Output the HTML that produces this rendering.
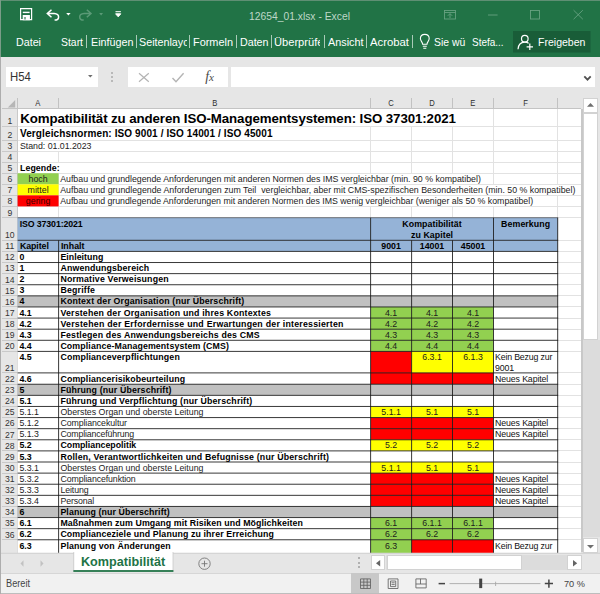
<!DOCTYPE html>
<html lang="de"><head><meta charset="utf-8"><title>12654_01.xlsx - Excel</title>
<style>
html,body{margin:0;padding:0;}
body{width:600px;height:594px;overflow:hidden;position:relative;background:#e6e6e6;font-family:"Liberation Sans",sans-serif;}
div{position:absolute;box-sizing:border-box;white-space:nowrap;}
svg{position:absolute;overflow:visible;}
#title{left:0;top:0;width:600px;height:57.3px;background:#217346;}
.u{transform-origin:0 50%;}
#sheet{left:0;top:97px;width:581.3px;height:456px;background:#fff;overflow:hidden;}
.gl{background:#e2e2e2;}
.c{overflow:hidden;color:#1c1c1c;font-size:8.8px;line-height:11px;}
.b{font-weight:bold;color:#000;}
.bd{background:#2b2b2b;}
.rh{color:#333;font-size:9.4px;transform:scaleX(.92);text-align:center;left:2px;width:15.6px;height:11px;line-height:11px;}
.ch{color:#2e2e2e;font-size:8.5px;text-align:center;top:1.1px;height:11px;line-height:11px;}
.sb{background:#fff;border:1px solid #d2d2d2;}
</style></head><body>

<div id="title"></div>
<div class="u" style="left:249px;top:8.75px;font-size:11.4px;line-height:15px;color:#bed8c8;transform:scaleX(0.9056)">12654_01.xlsx - Excel</div>
<svg style="left:0;top:0" width="600" height="57" viewBox="0 0 600 57" fill="none">
<g stroke="#fff" stroke-width="1.2">
<path d="M20.6 8.6 h11 v11 h-11z"/>
<path d="M22.8 12.4 h6.8" stroke-width="1.4"/>
<path d="M23.3 15.6 h6 v4 h-6z" fill="#fff"/>
<path d="M25 17 v2.6" stroke="#217346" stroke-width="1.1"/>
<path d="M51.5 9.7 l-4.2 3.8 l4.2 3.8 M47.6 13.5 h6.6 c6 0.4 5.6 6.6 0.4 6.6" stroke-width="1.5"/>
</g>
<path d="M66.2 13 h4.4 l-2.2 2.6z" fill="#fff"/>
<g stroke="#5b9a77" stroke-width="1.5">
<path d="M86.8 9.7 l4.2 3.8 l-4.2 3.8 M90.7 13.5 h-6.6 c-6 0.4 -5.6 6.6 -0.4 6.6"/>
</g>
<path d="M99.2 13 h3.8 l-1.9 2.4z" fill="#5b9a77"/>
<path d="M115.5 11.7 h5.4 M115.6 13.8 h5.2 l-2.6 3z" stroke="#fff" fill="#fff" stroke-width="1"/>
<g stroke="#6aa484" stroke-width="0.850">
<rect x="444.5" y="10.5" width="11" height="8.5"/>
<path d="M444.5 12.5 h11 M447.8 15.8 l2.2 -2.2 l2.2 2.2 M450 13.8 v4.2"/>
<path d="M488 15 h9.6"/>
<rect x="530.5" y="10.5" width="9" height="8.5"/>
<path d="M573.6 10.2 l9.2 9 M582.8 10.2 l-9.2 9"/>
</g>
<g stroke="#fff" stroke-width="1.1">
<path d="M422.6 44.2 c0 -2.2 -2.2 -3 -2.2 -5.6 c0 -2.6 2 -4.2 4.4 -4.2 c2.4 0 4.4 1.6 4.4 4.2 c0 2.6 -2.2 3.4 -2.2 5.6z M422.8 46.3 h4 M423.3 48.3 h3"/>
</g>
<rect x="513" y="31" width="77.5" height="21.5" fill="#195d38"/>
<g stroke="#fff" stroke-width="1.2">
<circle cx="524.8" cy="38.7" r="3.3"/>
<path d="M518 49.3 c0.3 -4.8 3 -7.2 6.8 -7.2 c1.6 0 2.8 0.4 3.8 1.2 M526.6 46.8 h6.4 M529.8 43.6 v6.4"/>
</g>
</svg>
<div class="u" style="left:15.5px;top:34.52px;font-size:11.5px;line-height:15px;color:#fff;transform:scaleX(0.9312)">Datei</div>
<div class="u" style="left:61px;top:34.52px;font-size:11.5px;line-height:15px;color:#fff;transform:scaleX(0.9059)">Start</div>
<div class="u" style="left:90.5px;top:34.52px;font-size:11.5px;line-height:15px;color:#fff;transform:scaleX(0.9361)">Einfügen</div>
<div style="left:139px;top:34.52px;width:48.3px;height:15px;overflow:hidden"><div class="u" style="left:0px;top:0px;font-size:11.5px;line-height:15px;color:#fff;transform:scaleX(0.9348)">Seitenlayo</div></div>
<div class="u" style="left:192.5px;top:34.52px;font-size:11.5px;line-height:15px;color:#fff;transform:scaleX(0.9484)">Formeln</div>
<div class="u" style="left:239.5px;top:34.52px;font-size:11.5px;line-height:15px;color:#fff;transform:scaleX(0.9287)">Daten</div>
<div style="left:274px;top:34.52px;width:45.6px;height:15px;overflow:hidden"><div class="u" style="left:0px;top:0px;font-size:11.5px;line-height:15px;color:#fff;transform:scaleX(0.9676)">Überprüfe</div></div>
<div class="u" style="left:327.5px;top:34.52px;font-size:11.5px;line-height:15px;color:#fff;transform:scaleX(0.9413)">Ansicht</div>
<div class="u" style="left:370px;top:34.52px;font-size:11.5px;line-height:15px;color:#fff;transform:scaleX(0.9840)">Acrobat</div>
<div class="u" style="left:434.4px;top:34.52px;font-size:11.5px;line-height:15px;color:#fff;transform:scaleX(0.9039)">Sie wü</div>
<div class="u" style="left:472.4px;top:34.52px;font-size:11.5px;line-height:15px;color:#fff;transform:scaleX(0.8672)">Stefa...</div>
<div class="u" style="left:537.6px;top:34.52px;font-size:11.5px;line-height:15px;color:#fff;transform:scaleX(0.9153)">Freigeben</div>
<div style="left:86.2px;top:35px;width:1px;height:13.3px;background:#a9cab7"></div>
<div style="left:135.5px;top:35px;width:1px;height:13.3px;background:#a9cab7"></div>
<div style="left:188.5px;top:35px;width:1px;height:13.3px;background:#a9cab7"></div>
<div style="left:235.5px;top:35px;width:1px;height:13.3px;background:#a9cab7"></div>
<div style="left:270.5px;top:35px;width:1px;height:13.3px;background:#a9cab7"></div>
<div style="left:323.5px;top:35px;width:1px;height:13.3px;background:#a9cab7"></div>
<div style="left:366px;top:35px;width:1px;height:13.3px;background:#a9cab7"></div>
<div style="left:411.9px;top:35px;width:1px;height:13.3px;background:#a9cab7"></div>
<div style="left:0;top:0;width:600px;height:1px;background:#5f8f74"></div>
<div style="left:0;top:0;width:1px;height:57px;background:#7a9c88"></div>
<div style="left:5.6px;top:67px;width:92.8px;height:20.3px;background:#fff"></div>
<div class="u" style="left:9.6px;top:69.24px;font-size:12px;line-height:16px;color:#333;transform:scaleX(0.9449)">H54</div>
<svg style="left:88px;top:75px" width="5" height="3"><path d="M0 0 h4.6 l-2.3 2.5z" fill="#6e6e6e"/></svg>
<div style="left:111.2px;top:71.6px;width:2px;height:2px;background:#b9b9b9"></div>
<div style="left:111.2px;top:75.6px;width:2px;height:2px;background:#b9b9b9"></div>
<div style="left:111.2px;top:79.6px;width:2px;height:2px;background:#b9b9b9"></div>
<div style="left:127.5px;top:67px;width:100.5px;height:20.3px;background:#fff"></div>
<svg style="left:0;top:0" width="600" height="594" fill="none"><path d="M139 73.2 l9.8 8.6 M148.8 73.2 l-9.8 8.6" stroke="#b4b4b4" stroke-width="1.2"/><path d="M172.5 78 l3.5 3.8 l7.6 -8.6" stroke="#b4b4b4" stroke-width="1.4"/></svg>
<div style="left:205.3px;top:68.5px;font-family:'Liberation Serif',serif;font-style:italic;font-size:14px;line-height:16px;color:#4a4a4a;letter-spacing:-0.3px">f<span style="font-size:11px">x</span></div>
<div style="left:230.7px;top:67px;width:364.7px;height:20.3px;background:#fff"></div>
<svg style="left:584px;top:76px" width="8" height="6" fill="none"><path d="M0.3 0.4 l3.2 3.3 l3.2 -3.3" stroke="#505050" stroke-width="1.8"/></svg>
<div id="sheet">
<div style="left:0;top:0;width:581.3px;height:11.9px;background:#e6e6e6"></div>
<div style="left:0;top:0;width:17.6px;height:456px;background:#e6e6e6"></div>
<div style="left:0;top:0;width:1.1px;height:456px;background:#adadad"></div>
<svg style="left:8.4px;top:3px" width="8" height="8"><path d="M7.2 0 v7.4 h-7.4z" fill="#b6b6b6"/></svg>
<div class="ch" style="left:17.6px;width:41px"><span style="display:inline-block;transform:scaleX(.9)">A</span></div>
<div class="ch" style="left:58.6px;width:312px"><span style="display:inline-block;transform:scaleX(.9)">B</span></div>
<div class="ch" style="left:370.6px;width:41px"><span style="display:inline-block;transform:scaleX(.9)">C</span></div>
<div class="ch" style="left:411.6px;width:40.9px"><span style="display:inline-block;transform:scaleX(.9)">D</span></div>
<div class="ch" style="left:452.5px;width:41px"><span style="display:inline-block;transform:scaleX(.9)">E</span></div>
<div class="ch" style="left:493.5px;width:64.2px"><span style="display:inline-block;transform:scaleX(.9)">F</span></div>
<div style="left:58.1px;top:1px;width:1px;height:10.9px;background:#c2c2c2"></div>
<div style="left:370.1px;top:1px;width:1px;height:10.9px;background:#c2c2c2"></div>
<div style="left:411.1px;top:1px;width:1px;height:10.9px;background:#c2c2c2"></div>
<div style="left:452px;top:1px;width:1px;height:10.9px;background:#c2c2c2"></div>
<div style="left:493px;top:1px;width:1px;height:10.9px;background:#c2c2c2"></div>
<div style="left:557.2px;top:1px;width:1px;height:10.9px;background:#c2c2c2"></div>
<div style="left:17.1px;top:1px;width:1px;height:10.9px;background:#c2c2c2"></div>
<div style="left:2px;top:11.4px;width:581.3px;height:1px;background:#c4c4c4"></div>
<div class="gl" style="left:17.6px;top:28.9px;width:565px;height:1px"></div>
<div style="left:2px;top:28.9px;width:15.6px;height:1px;background:#c9c9c9"></div>
<div class="gl" style="left:17.6px;top:42.6px;width:565px;height:1px"></div>
<div style="left:2px;top:42.6px;width:15.6px;height:1px;background:#c9c9c9"></div>
<div class="gl" style="left:17.6px;top:53.65px;width:565px;height:1px"></div>
<div style="left:2px;top:53.65px;width:15.6px;height:1px;background:#c9c9c9"></div>
<div class="gl" style="left:17.6px;top:64.7px;width:565px;height:1px"></div>
<div style="left:2px;top:64.7px;width:15.6px;height:1px;background:#c9c9c9"></div>
<div class="gl" style="left:17.6px;top:75.75px;width:565px;height:1px"></div>
<div style="left:2px;top:75.75px;width:15.6px;height:1px;background:#c9c9c9"></div>
<div class="gl" style="left:17.6px;top:86.8px;width:565px;height:1px"></div>
<div style="left:2px;top:86.8px;width:15.6px;height:1px;background:#c9c9c9"></div>
<div class="gl" style="left:17.6px;top:97.85px;width:565px;height:1px"></div>
<div style="left:2px;top:97.85px;width:15.6px;height:1px;background:#c9c9c9"></div>
<div class="gl" style="left:17.6px;top:108.9px;width:565px;height:1px"></div>
<div style="left:2px;top:108.9px;width:15.6px;height:1px;background:#c9c9c9"></div>
<div class="gl" style="left:17.6px;top:120.2px;width:565px;height:1px"></div>
<div style="left:2px;top:120.2px;width:15.6px;height:1px;background:#c9c9c9"></div>
<div class="gl" style="left:17.6px;top:142.8px;width:565px;height:1px"></div>
<div style="left:2px;top:142.8px;width:15.6px;height:1px;background:#c9c9c9"></div>
<div class="gl" style="left:17.6px;top:153.91px;width:565px;height:1px"></div>
<div style="left:2px;top:153.91px;width:15.6px;height:1px;background:#c9c9c9"></div>
<div class="gl" style="left:17.6px;top:165.02px;width:565px;height:1px"></div>
<div style="left:2px;top:165.02px;width:15.6px;height:1px;background:#c9c9c9"></div>
<div class="gl" style="left:17.6px;top:176.13px;width:565px;height:1px"></div>
<div style="left:2px;top:176.13px;width:15.6px;height:1px;background:#c9c9c9"></div>
<div class="gl" style="left:17.6px;top:187.24px;width:565px;height:1px"></div>
<div style="left:2px;top:187.24px;width:15.6px;height:1px;background:#c9c9c9"></div>
<div class="gl" style="left:17.6px;top:198.35px;width:565px;height:1px"></div>
<div style="left:2px;top:198.35px;width:15.6px;height:1px;background:#c9c9c9"></div>
<div class="gl" style="left:17.6px;top:209.46px;width:565px;height:1px"></div>
<div style="left:2px;top:209.46px;width:15.6px;height:1px;background:#c9c9c9"></div>
<div class="gl" style="left:17.6px;top:220.57px;width:565px;height:1px"></div>
<div style="left:2px;top:220.57px;width:15.6px;height:1px;background:#c9c9c9"></div>
<div class="gl" style="left:17.6px;top:231.68px;width:565px;height:1px"></div>
<div style="left:2px;top:231.68px;width:15.6px;height:1px;background:#c9c9c9"></div>
<div class="gl" style="left:17.6px;top:242.79px;width:565px;height:1px"></div>
<div style="left:2px;top:242.79px;width:15.6px;height:1px;background:#c9c9c9"></div>
<div class="gl" style="left:17.6px;top:253.9px;width:565px;height:1px"></div>
<div style="left:2px;top:253.9px;width:15.6px;height:1px;background:#c9c9c9"></div>
<div class="gl" style="left:17.6px;top:275.4px;width:565px;height:1px"></div>
<div style="left:2px;top:275.4px;width:15.6px;height:1px;background:#c9c9c9"></div>
<div class="gl" style="left:17.6px;top:286.74px;width:565px;height:1px"></div>
<div style="left:2px;top:286.74px;width:15.6px;height:1px;background:#c9c9c9"></div>
<div class="gl" style="left:17.6px;top:297.85px;width:565px;height:1px"></div>
<div style="left:2px;top:297.85px;width:15.6px;height:1px;background:#c9c9c9"></div>
<div class="gl" style="left:17.6px;top:308.96px;width:565px;height:1px"></div>
<div style="left:2px;top:308.96px;width:15.6px;height:1px;background:#c9c9c9"></div>
<div class="gl" style="left:17.6px;top:320.07px;width:565px;height:1px"></div>
<div style="left:2px;top:320.07px;width:15.6px;height:1px;background:#c9c9c9"></div>
<div class="gl" style="left:17.6px;top:331.18px;width:565px;height:1px"></div>
<div style="left:2px;top:331.18px;width:15.6px;height:1px;background:#c9c9c9"></div>
<div class="gl" style="left:17.6px;top:342.29px;width:565px;height:1px"></div>
<div style="left:2px;top:342.29px;width:15.6px;height:1px;background:#c9c9c9"></div>
<div class="gl" style="left:17.6px;top:353.4px;width:565px;height:1px"></div>
<div style="left:2px;top:353.4px;width:15.6px;height:1px;background:#c9c9c9"></div>
<div class="gl" style="left:17.6px;top:364.51px;width:565px;height:1px"></div>
<div style="left:2px;top:364.51px;width:15.6px;height:1px;background:#c9c9c9"></div>
<div class="gl" style="left:17.6px;top:375.62px;width:565px;height:1px"></div>
<div style="left:2px;top:375.62px;width:15.6px;height:1px;background:#c9c9c9"></div>
<div class="gl" style="left:17.6px;top:386.73px;width:565px;height:1px"></div>
<div style="left:2px;top:386.73px;width:15.6px;height:1px;background:#c9c9c9"></div>
<div class="gl" style="left:17.6px;top:397.84px;width:565px;height:1px"></div>
<div style="left:2px;top:397.84px;width:15.6px;height:1px;background:#c9c9c9"></div>
<div class="gl" style="left:17.6px;top:408.95px;width:565px;height:1px"></div>
<div style="left:2px;top:408.95px;width:15.6px;height:1px;background:#c9c9c9"></div>
<div class="gl" style="left:17.6px;top:420.06px;width:565px;height:1px"></div>
<div style="left:2px;top:420.06px;width:15.6px;height:1px;background:#c9c9c9"></div>
<div class="gl" style="left:17.6px;top:431.17px;width:565px;height:1px"></div>
<div style="left:2px;top:431.17px;width:15.6px;height:1px;background:#c9c9c9"></div>
<div class="gl" style="left:17.6px;top:442.28px;width:565px;height:1px"></div>
<div style="left:2px;top:442.28px;width:15.6px;height:1px;background:#c9c9c9"></div>
<div class="gl" style="left:17.6px;top:464.5px;width:565px;height:1px"></div>
<div style="left:2px;top:464.5px;width:15.6px;height:1px;background:#c9c9c9"></div>
<div class="gl" style="left:58.1px;top:11.9px;width:1px;height:456px"></div>
<div class="gl" style="left:370.1px;top:11.9px;width:1px;height:456px"></div>
<div class="gl" style="left:411.1px;top:11.9px;width:1px;height:456px"></div>
<div class="gl" style="left:452px;top:11.9px;width:1px;height:456px"></div>
<div class="gl" style="left:493px;top:11.9px;width:1px;height:456px"></div>
<div class="gl" style="left:557.2px;top:11.9px;width:1px;height:456px"></div>
<div class="gl" style="left:599.5px;top:11.9px;width:1px;height:456px"></div>
<div style="left:17.1px;top:11.9px;width:1px;height:456px;background:#c9c9c9"></div>
<div class="rh" style="top:18.2px">1</div>
<div class="rh" style="top:31.9px">2</div>
<div class="rh" style="top:42.95px">3</div>
<div class="rh" style="top:54px">4</div>
<div class="rh" style="top:65.05px">5</div>
<div class="rh" style="top:76.1px">6</div>
<div class="rh" style="top:87.15px">7</div>
<div class="rh" style="top:98.2px">8</div>
<div class="rh" style="top:109.5px">9</div>
<div class="rh" style="top:132.1px">10</div>
<div class="rh" style="top:143.21px">11</div>
<div class="rh" style="top:154.32px">12</div>
<div class="rh" style="top:165.43px">13</div>
<div class="rh" style="top:176.54px">14</div>
<div class="rh" style="top:187.65px">15</div>
<div class="rh" style="top:198.76px">16</div>
<div class="rh" style="top:209.87px">17</div>
<div class="rh" style="top:220.98px">18</div>
<div class="rh" style="top:232.09px">19</div>
<div class="rh" style="top:243.2px">20</div>
<div class="rh" style="top:264.7px">21</div>
<div class="rh" style="top:276.04px">22</div>
<div class="rh" style="top:287.15px">23</div>
<div class="rh" style="top:298.26px">24</div>
<div class="rh" style="top:309.37px">25</div>
<div class="rh" style="top:320.48px">26</div>
<div class="rh" style="top:331.59px">27</div>
<div class="rh" style="top:342.7px">28</div>
<div class="rh" style="top:353.81px">29</div>
<div class="rh" style="top:364.92px">30</div>
<div class="rh" style="top:376.03px">31</div>
<div class="rh" style="top:387.14px">32</div>
<div class="rh" style="top:398.25px">33</div>
<div class="rh" style="top:409.36px">34</div>
<div class="rh" style="top:420.47px">35</div>
<div class="rh" style="top:431.58px">36</div>
<svg style="left:0;top:0" width="581.3" height="456"><rect x="17.6" y="76.25" width="41" height="11.05" fill="#92d050"/><rect x="17.6" y="87.3" width="41" height="11.05" fill="#ffff00"/><rect x="17.6" y="98.35" width="41" height="11.05" fill="#ff0000"/><rect x="17.6" y="120.7" width="353" height="22.6" fill="#95b3d7"/><rect x="370.6" y="120.7" width="122.9" height="22.6" fill="#95b3d7"/><rect x="493.5" y="120.7" width="64.2" height="22.6" fill="#95b3d7"/><rect x="17.6" y="143.3" width="41" height="11.11" fill="#95b3d7"/><rect x="58.6" y="143.3" width="312" height="11.11" fill="#95b3d7"/><rect x="370.6" y="143.3" width="41" height="11.11" fill="#95b3d7"/><rect x="411.6" y="143.3" width="40.9" height="11.11" fill="#95b3d7"/><rect x="452.5" y="143.3" width="41" height="11.11" fill="#95b3d7"/><rect x="493.5" y="143.3" width="64.2" height="11.11" fill="#95b3d7"/><rect x="17.6" y="154.41" width="41" height="11.11" fill="#fff"/><rect x="370.6" y="154.41" width="41" height="11.11" fill="#fff"/><rect x="411.6" y="154.41" width="40.9" height="11.11" fill="#fff"/><rect x="452.5" y="154.41" width="41" height="11.11" fill="#fff"/><rect x="493.5" y="154.41" width="64.2" height="11.11" fill="#fff"/><rect x="58.6" y="154.41" width="312" height="11.11" fill="#fff"/><rect x="17.6" y="165.52" width="41" height="11.11" fill="#fff"/><rect x="370.6" y="165.52" width="41" height="11.11" fill="#fff"/><rect x="411.6" y="165.52" width="40.9" height="11.11" fill="#fff"/><rect x="452.5" y="165.52" width="41" height="11.11" fill="#fff"/><rect x="493.5" y="165.52" width="64.2" height="11.11" fill="#fff"/><rect x="58.6" y="165.52" width="312" height="11.11" fill="#fff"/><rect x="17.6" y="176.63" width="41" height="11.11" fill="#fff"/><rect x="370.6" y="176.63" width="41" height="11.11" fill="#fff"/><rect x="411.6" y="176.63" width="40.9" height="11.11" fill="#fff"/><rect x="452.5" y="176.63" width="41" height="11.11" fill="#fff"/><rect x="493.5" y="176.63" width="64.2" height="11.11" fill="#fff"/><rect x="58.6" y="176.63" width="312" height="11.11" fill="#fff"/><rect x="17.6" y="187.74" width="41" height="11.11" fill="#fff"/><rect x="370.6" y="187.74" width="41" height="11.11" fill="#fff"/><rect x="411.6" y="187.74" width="40.9" height="11.11" fill="#fff"/><rect x="452.5" y="187.74" width="41" height="11.11" fill="#fff"/><rect x="493.5" y="187.74" width="64.2" height="11.11" fill="#fff"/><rect x="58.6" y="187.74" width="312" height="11.11" fill="#fff"/><rect x="17.6" y="198.85" width="41" height="11.11" fill="#c0c0c0"/><rect x="370.6" y="198.85" width="41" height="11.11" fill="#c0c0c0"/><rect x="411.6" y="198.85" width="40.9" height="11.11" fill="#c0c0c0"/><rect x="452.5" y="198.85" width="41" height="11.11" fill="#c0c0c0"/><rect x="493.5" y="198.85" width="64.2" height="11.11" fill="#c0c0c0"/><rect x="58.6" y="198.85" width="312" height="11.11" fill="#c0c0c0"/><rect x="17.6" y="209.96" width="41" height="11.11" fill="#fff"/><rect x="370.6" y="209.96" width="41" height="11.11" fill="#92d050"/><rect x="411.6" y="209.96" width="40.9" height="11.11" fill="#92d050"/><rect x="452.5" y="209.96" width="41" height="11.11" fill="#92d050"/><rect x="493.5" y="209.96" width="64.2" height="11.11" fill="#fff"/><rect x="58.6" y="209.96" width="312" height="11.11" fill="#fff"/><rect x="17.6" y="221.07" width="41" height="11.11" fill="#fff"/><rect x="370.6" y="221.07" width="41" height="11.11" fill="#92d050"/><rect x="411.6" y="221.07" width="40.9" height="11.11" fill="#92d050"/><rect x="452.5" y="221.07" width="41" height="11.11" fill="#92d050"/><rect x="493.5" y="221.07" width="64.2" height="11.11" fill="#fff"/><rect x="58.6" y="221.07" width="312" height="11.11" fill="#fff"/><rect x="17.6" y="232.18" width="41" height="11.11" fill="#fff"/><rect x="370.6" y="232.18" width="41" height="11.11" fill="#92d050"/><rect x="411.6" y="232.18" width="40.9" height="11.11" fill="#92d050"/><rect x="452.5" y="232.18" width="41" height="11.11" fill="#92d050"/><rect x="493.5" y="232.18" width="64.2" height="11.11" fill="#fff"/><rect x="58.6" y="232.18" width="312" height="11.11" fill="#fff"/><rect x="17.6" y="243.29" width="41" height="11.11" fill="#fff"/><rect x="370.6" y="243.29" width="41" height="11.11" fill="#92d050"/><rect x="411.6" y="243.29" width="40.9" height="11.11" fill="#92d050"/><rect x="452.5" y="243.29" width="41" height="11.11" fill="#92d050"/><rect x="493.5" y="243.29" width="64.2" height="11.11" fill="#fff"/><rect x="58.6" y="243.29" width="312" height="11.11" fill="#fff"/><rect x="17.6" y="254.4" width="41" height="21.5" fill="#fff"/><rect x="370.6" y="254.4" width="41" height="21.5" fill="#ff0000"/><rect x="411.6" y="254.4" width="40.9" height="21.5" fill="#ffff00"/><rect x="452.5" y="254.4" width="41" height="21.5" fill="#ffff00"/><rect x="493.5" y="254.4" width="64.2" height="21.5" fill="#fff"/><rect x="58.6" y="254.4" width="312" height="21.5" fill="#fff"/><rect x="17.6" y="275.9" width="41" height="11.34" fill="#fff"/><rect x="370.6" y="275.9" width="41" height="11.34" fill="#ff0000"/><rect x="411.6" y="275.9" width="40.9" height="11.34" fill="#ff0000"/><rect x="452.5" y="275.9" width="41" height="11.34" fill="#ff0000"/><rect x="493.5" y="275.9" width="64.2" height="11.34" fill="#fff"/><rect x="58.6" y="275.9" width="312" height="11.34" fill="#fff"/><rect x="17.6" y="287.24" width="41" height="11.11" fill="#c0c0c0"/><rect x="370.6" y="287.24" width="41" height="11.11" fill="#c0c0c0"/><rect x="411.6" y="287.24" width="40.9" height="11.11" fill="#c0c0c0"/><rect x="452.5" y="287.24" width="41" height="11.11" fill="#c0c0c0"/><rect x="493.5" y="287.24" width="64.2" height="11.11" fill="#c0c0c0"/><rect x="58.6" y="287.24" width="312" height="11.11" fill="#c0c0c0"/><rect x="17.6" y="298.35" width="41" height="11.11" fill="#fff"/><rect x="370.6" y="298.35" width="41" height="11.11" fill="#fff"/><rect x="411.6" y="298.35" width="40.9" height="11.11" fill="#fff"/><rect x="452.5" y="298.35" width="41" height="11.11" fill="#fff"/><rect x="493.5" y="298.35" width="64.2" height="11.11" fill="#fff"/><rect x="58.6" y="298.35" width="312" height="11.11" fill="#fff"/><rect x="17.6" y="309.46" width="41" height="11.11" fill="#fff"/><rect x="370.6" y="309.46" width="41" height="11.11" fill="#ffff00"/><rect x="411.6" y="309.46" width="40.9" height="11.11" fill="#ffff00"/><rect x="452.5" y="309.46" width="41" height="11.11" fill="#ffff00"/><rect x="493.5" y="309.46" width="64.2" height="11.11" fill="#fff"/><rect x="58.6" y="309.46" width="312" height="11.11" fill="#fff"/><rect x="17.6" y="320.57" width="41" height="11.11" fill="#fff"/><rect x="370.6" y="320.57" width="41" height="11.11" fill="#ff0000"/><rect x="411.6" y="320.57" width="40.9" height="11.11" fill="#ff0000"/><rect x="452.5" y="320.57" width="41" height="11.11" fill="#ff0000"/><rect x="493.5" y="320.57" width="64.2" height="11.11" fill="#fff"/><rect x="58.6" y="320.57" width="312" height="11.11" fill="#fff"/><rect x="17.6" y="331.68" width="41" height="11.11" fill="#fff"/><rect x="370.6" y="331.68" width="41" height="11.11" fill="#ff0000"/><rect x="411.6" y="331.68" width="40.9" height="11.11" fill="#ff0000"/><rect x="452.5" y="331.68" width="41" height="11.11" fill="#ff0000"/><rect x="493.5" y="331.68" width="64.2" height="11.11" fill="#fff"/><rect x="58.6" y="331.68" width="312" height="11.11" fill="#fff"/><rect x="17.6" y="342.79" width="41" height="11.11" fill="#fff"/><rect x="370.6" y="342.79" width="41" height="11.11" fill="#ffff00"/><rect x="411.6" y="342.79" width="40.9" height="11.11" fill="#ffff00"/><rect x="452.5" y="342.79" width="41" height="11.11" fill="#ffff00"/><rect x="493.5" y="342.79" width="64.2" height="11.11" fill="#fff"/><rect x="58.6" y="342.79" width="312" height="11.11" fill="#fff"/><rect x="17.6" y="353.9" width="41" height="11.11" fill="#fff"/><rect x="370.6" y="353.9" width="41" height="11.11" fill="#fff"/><rect x="411.6" y="353.9" width="40.9" height="11.11" fill="#fff"/><rect x="452.5" y="353.9" width="41" height="11.11" fill="#fff"/><rect x="493.5" y="353.9" width="64.2" height="11.11" fill="#fff"/><rect x="58.6" y="353.9" width="312" height="11.11" fill="#fff"/><rect x="17.6" y="365.01" width="41" height="11.11" fill="#fff"/><rect x="370.6" y="365.01" width="41" height="11.11" fill="#ffff00"/><rect x="411.6" y="365.01" width="40.9" height="11.11" fill="#ffff00"/><rect x="452.5" y="365.01" width="41" height="11.11" fill="#ffff00"/><rect x="493.5" y="365.01" width="64.2" height="11.11" fill="#fff"/><rect x="58.6" y="365.01" width="312" height="11.11" fill="#fff"/><rect x="17.6" y="376.12" width="41" height="11.11" fill="#fff"/><rect x="370.6" y="376.12" width="41" height="11.11" fill="#ff0000"/><rect x="411.6" y="376.12" width="40.9" height="11.11" fill="#ff0000"/><rect x="452.5" y="376.12" width="41" height="11.11" fill="#ff0000"/><rect x="493.5" y="376.12" width="64.2" height="11.11" fill="#fff"/><rect x="58.6" y="376.12" width="312" height="11.11" fill="#fff"/><rect x="17.6" y="387.23" width="41" height="11.11" fill="#fff"/><rect x="370.6" y="387.23" width="41" height="11.11" fill="#ff0000"/><rect x="411.6" y="387.23" width="40.9" height="11.11" fill="#ff0000"/><rect x="452.5" y="387.23" width="41" height="11.11" fill="#ff0000"/><rect x="493.5" y="387.23" width="64.2" height="11.11" fill="#fff"/><rect x="58.6" y="387.23" width="312" height="11.11" fill="#fff"/><rect x="17.6" y="398.34" width="41" height="11.11" fill="#fff"/><rect x="370.6" y="398.34" width="41" height="11.11" fill="#ff0000"/><rect x="411.6" y="398.34" width="40.9" height="11.11" fill="#ff0000"/><rect x="452.5" y="398.34" width="41" height="11.11" fill="#ff0000"/><rect x="493.5" y="398.34" width="64.2" height="11.11" fill="#fff"/><rect x="58.6" y="398.34" width="312" height="11.11" fill="#fff"/><rect x="17.6" y="409.45" width="41" height="11.11" fill="#c0c0c0"/><rect x="370.6" y="409.45" width="41" height="11.11" fill="#c0c0c0"/><rect x="411.6" y="409.45" width="40.9" height="11.11" fill="#c0c0c0"/><rect x="452.5" y="409.45" width="41" height="11.11" fill="#c0c0c0"/><rect x="493.5" y="409.45" width="64.2" height="11.11" fill="#c0c0c0"/><rect x="58.6" y="409.45" width="312" height="11.11" fill="#c0c0c0"/><rect x="17.6" y="420.56" width="41" height="11.11" fill="#fff"/><rect x="370.6" y="420.56" width="41" height="11.11" fill="#92d050"/><rect x="411.6" y="420.56" width="40.9" height="11.11" fill="#92d050"/><rect x="452.5" y="420.56" width="41" height="11.11" fill="#92d050"/><rect x="493.5" y="420.56" width="64.2" height="11.11" fill="#fff"/><rect x="58.6" y="420.56" width="312" height="11.11" fill="#fff"/><rect x="17.6" y="431.67" width="41" height="11.11" fill="#fff"/><rect x="370.6" y="431.67" width="41" height="11.11" fill="#92d050"/><rect x="411.6" y="431.67" width="40.9" height="11.11" fill="#92d050"/><rect x="452.5" y="431.67" width="41" height="11.11" fill="#92d050"/><rect x="493.5" y="431.67" width="64.2" height="11.11" fill="#fff"/><rect x="58.6" y="431.67" width="312" height="11.11" fill="#fff"/><rect x="17.6" y="442.78" width="41" height="22.22" fill="#fff"/><rect x="370.6" y="442.78" width="41" height="22.22" fill="#92d050"/><rect x="411.6" y="442.78" width="40.9" height="22.22" fill="#ff0000"/><rect x="452.5" y="442.78" width="41" height="22.22" fill="#ff0000"/><rect x="493.5" y="442.78" width="64.2" height="22.22" fill="#fff"/><rect x="58.6" y="442.78" width="312" height="22.22" fill="#fff"/></svg>
<div style="left:18.2px;top:12.4px;width:474.8px;height:16.5px;background:#fff"></div>
<div style="left:18.2px;top:29.9px;width:281.8px;height:12.7px;background:#fff"></div>
<div style="left:18.2px;top:43.6px;width:81.8px;height:10.05px;background:#fff"></div>
<div style="left:18.2px;top:65.7px;width:43.8px;height:10.05px;background:#fff"></div>
<div style="left:59.2px;top:76.75px;width:433.8px;height:10.05px;background:#fff"></div>
<div style="left:59.2px;top:87.8px;width:521.8px;height:10.05px;background:#fff"></div>
<div style="left:59.2px;top:98.85px;width:497.8px;height:10.05px;background:#fff"></div>
<div class="c" style="left:17.6px;top:11.9px;width:540.1px;height:17.5px;overflow:visible;"><div class="c b" style="left:0;right:0;bottom:-1.2px;text-align:left;padding-left:2.6px;font-size:13.3px;line-height:16.6px;letter-spacing:-0.098px;overflow:visible;">Kompatibilität zu anderen ISO-Managementsystemen: ISO 37301:2021</div></div>
<div class="c" style="left:17.6px;top:29.4px;width:540.1px;height:13.7px;overflow:visible;"><div class="c b" style="left:0;right:0;bottom:-0.8px;text-align:left;padding-left:2.4px;font-size:10.0px;line-height:12.5px;letter-spacing:0.105px;overflow:visible;">Vergleichsnormen: ISO 9001 / ISO 14001 / ISO 45001</div></div>
<div class="c" style="left:17.6px;top:43.1px;width:540.1px;height:11.05px;overflow:visible;"><div class="c" style="left:0;right:0;bottom:-0.5px;text-align:left;padding-left:2.4px;letter-spacing:-0.027px;overflow:visible;">Stand: 01.01.2023</div></div>
<div class="c" style="left:17.6px;top:65.2px;width:353px;height:11.05px;overflow:visible;"><div class="c b" style="left:0;right:0;bottom:-0.5px;text-align:left;padding-left:2.3px;letter-spacing:0.112px;overflow:visible;">Legende:</div></div>
<div class="c" style="left:17.6px;top:76.25px;width:41px;height:11.05px;"><div class="c" style="left:0;right:0;bottom:-0.5px;text-align:center;">hoch</div></div>
<div class="c" style="left:17.6px;top:87.3px;width:41px;height:11.05px;"><div class="c" style="left:0;right:0;bottom:-0.5px;text-align:center;">mittel</div></div>
<div class="c" style="left:17.6px;top:98.35px;width:41px;height:11.05px;"><div class="c" style="left:0;right:0;bottom:-0.5px;text-align:center;color:#400000;">gering</div></div>
<div class="c" style="left:58.6px;top:76.25px;width:541.4px;height:11.05px;overflow:visible;"><div class="c" style="left:0;right:0;bottom:-0.5px;text-align:left;padding-left:1.6px;letter-spacing:-0.009px;overflow:visible;">Aufbau und grundlegende Anforderungen mit anderen Normen des IMS vergleichbar (min. 90 % kompatibel)</div></div>
<div class="c" style="left:58.6px;top:87.3px;width:541.4px;height:11.05px;overflow:visible;"><div class="c" style="left:0;right:0;bottom:-0.5px;text-align:left;padding-left:1.6px;white-space:pre;letter-spacing:0.003px;overflow:visible;">Aufbau und grundlegende Anforderungen zum Teil  vergleichbar, aber mit CMS-spezifischen Besonderheiten (min. 50 % kompatibel)</div></div>
<div class="c" style="left:58.6px;top:98.35px;width:541.4px;height:11.05px;overflow:visible;"><div class="c" style="left:0;right:0;bottom:-0.5px;text-align:left;padding-left:1.6px;letter-spacing:-0.017px;overflow:visible;">Aufbau und grundlegende Anforderungen mit anderen Normen des IMS wenig vergleichbar (weniger als 50 % kompatibel)</div></div>
<div class="c" style="left:17.6px;top:120.7px;width:353px;height:22.6px;"><div class="c b" style="left:0;right:0;top:1px;text-align:left;padding-left:2.1px;letter-spacing:-0.122px;">ISO 37301:2021</div></div>
<div class="c" style="left:370.6px;top:120.7px;width:122.9px;height:22.6px;"><div class="c b" style="left:0;right:0;top:1px;text-align:center;white-space:pre;letter-spacing:0.057px;padding-left:0.057px;">Kompatibilität
zu Kapitel</div></div>
<div class="c" style="left:493.5px;top:120.7px;width:64.2px;height:22.6px;"><div class="c b" style="left:0;right:0;top:1px;text-align:center;letter-spacing:0.073px;padding-left:0.073px;">Bemerkung</div></div>
<div class="c" style="left:17.6px;top:143.3px;width:41px;height:11.11px;"><div class="c b" style="left:0;right:0;bottom:-0.5px;text-align:left;padding-left:2.3px;letter-spacing:-0.057px;">Kapitel</div></div>
<div class="c" style="left:58.6px;top:143.3px;width:312px;height:11.11px;"><div class="c b" style="left:0;right:0;bottom:-0.5px;text-align:left;padding-left:2.3px;letter-spacing:0.027px;">Inhalt</div></div>
<div class="c" style="left:370.6px;top:143.3px;width:41px;height:11.11px;"><div class="c b" style="left:0;right:0;bottom:-0.5px;text-align:center;">9001</div></div>
<div class="c" style="left:411.6px;top:143.3px;width:40.9px;height:11.11px;"><div class="c b" style="left:0;right:0;bottom:-0.5px;text-align:center;">14001</div></div>
<div class="c" style="left:452.5px;top:143.3px;width:41px;height:11.11px;"><div class="c b" style="left:0;right:0;bottom:-0.5px;text-align:center;">45001</div></div>
<div class="c" style="left:493.5px;top:143.3px;width:64.2px;height:11.11px;"></div>
<div class="c" style="left:17.6px;top:154.41px;width:41px;height:11.11px;"><div class="c b" style="left:0;right:0;bottom:-0.5px;text-align:left;padding-left:1.8px;">0</div></div>
<div class="c" style="left:370.6px;top:154.41px;width:41px;height:11.11px;"></div>
<div class="c" style="left:411.6px;top:154.41px;width:40.9px;height:11.11px;"></div>
<div class="c" style="left:452.5px;top:154.41px;width:41px;height:11.11px;"></div>
<div class="c" style="left:493.5px;top:154.41px;width:64.2px;height:11.11px;"></div>
<div class="c" style="left:58.6px;top:154.41px;width:312px;height:11.11px;"><div class="c b" style="left:0;right:0;bottom:-0.5px;text-align:left;padding-left:1.8px;letter-spacing:0.041px;">Einleitung</div></div>
<div class="c" style="left:17.6px;top:165.52px;width:41px;height:11.11px;"><div class="c b" style="left:0;right:0;bottom:-0.5px;text-align:left;padding-left:1.8px;">1</div></div>
<div class="c" style="left:370.6px;top:165.52px;width:41px;height:11.11px;"></div>
<div class="c" style="left:411.6px;top:165.52px;width:40.9px;height:11.11px;"></div>
<div class="c" style="left:452.5px;top:165.52px;width:41px;height:11.11px;"></div>
<div class="c" style="left:493.5px;top:165.52px;width:64.2px;height:11.11px;"></div>
<div class="c" style="left:58.6px;top:165.52px;width:312px;height:11.11px;"><div class="c b" style="left:0;right:0;bottom:-0.5px;text-align:left;padding-left:1.8px;letter-spacing:0.141px;">Anwendungsbereich</div></div>
<div class="c" style="left:17.6px;top:176.63px;width:41px;height:11.11px;"><div class="c b" style="left:0;right:0;bottom:-0.5px;text-align:left;padding-left:1.8px;">2</div></div>
<div class="c" style="left:370.6px;top:176.63px;width:41px;height:11.11px;"></div>
<div class="c" style="left:411.6px;top:176.63px;width:40.9px;height:11.11px;"></div>
<div class="c" style="left:452.5px;top:176.63px;width:41px;height:11.11px;"></div>
<div class="c" style="left:493.5px;top:176.63px;width:64.2px;height:11.11px;"></div>
<div class="c" style="left:58.6px;top:176.63px;width:312px;height:11.11px;"><div class="c b" style="left:0;right:0;bottom:-0.5px;text-align:left;padding-left:1.8px;letter-spacing:0.173px;">Normative Verweisungen</div></div>
<div class="c" style="left:17.6px;top:187.74px;width:41px;height:11.11px;"><div class="c b" style="left:0;right:0;bottom:-0.5px;text-align:left;padding-left:1.8px;">3</div></div>
<div class="c" style="left:370.6px;top:187.74px;width:41px;height:11.11px;"></div>
<div class="c" style="left:411.6px;top:187.74px;width:40.9px;height:11.11px;"></div>
<div class="c" style="left:452.5px;top:187.74px;width:41px;height:11.11px;"></div>
<div class="c" style="left:493.5px;top:187.74px;width:64.2px;height:11.11px;"></div>
<div class="c" style="left:58.6px;top:187.74px;width:312px;height:11.11px;"><div class="c b" style="left:0;right:0;bottom:-0.5px;text-align:left;padding-left:1.8px;letter-spacing:0.193px;">Begriffe</div></div>
<div class="c" style="left:17.6px;top:198.85px;width:41px;height:11.11px;"><div class="c b" style="left:0;right:0;bottom:-0.5px;text-align:left;padding-left:1.8px;">4</div></div>
<div class="c" style="left:370.6px;top:198.85px;width:41px;height:11.11px;"></div>
<div class="c" style="left:411.6px;top:198.85px;width:40.9px;height:11.11px;"></div>
<div class="c" style="left:452.5px;top:198.85px;width:41px;height:11.11px;"></div>
<div class="c" style="left:493.5px;top:198.85px;width:64.2px;height:11.11px;"></div>
<div class="c" style="left:58.6px;top:198.85px;width:312px;height:11.11px;"><div class="c b" style="left:0;right:0;bottom:-0.5px;text-align:left;padding-left:1.8px;letter-spacing:0.157px;">Kontext der Organisation (nur Überschrift)</div></div>
<div class="c" style="left:17.6px;top:209.96px;width:41px;height:11.11px;"><div class="c b" style="left:0;right:0;bottom:-0.5px;text-align:left;padding-left:1.8px;">4.1</div></div>
<div class="c" style="left:370.6px;top:209.96px;width:41px;height:11.11px;"><div class="c" style="left:0;right:0;bottom:-0.5px;text-align:center;">4.1</div></div>
<div class="c" style="left:411.6px;top:209.96px;width:40.9px;height:11.11px;"><div class="c" style="left:0;right:0;bottom:-0.5px;text-align:center;">4.1</div></div>
<div class="c" style="left:452.5px;top:209.96px;width:41px;height:11.11px;"><div class="c" style="left:0;right:0;bottom:-0.5px;text-align:center;">4.1</div></div>
<div class="c" style="left:493.5px;top:209.96px;width:64.2px;height:11.11px;"></div>
<div class="c" style="left:58.6px;top:209.96px;width:312px;height:11.11px;"><div class="c b" style="left:0;right:0;bottom:-0.5px;text-align:left;padding-left:1.8px;letter-spacing:0.192px;">Verstehen der Organisation und ihres Kontextes</div></div>
<div class="c" style="left:17.6px;top:221.07px;width:41px;height:11.11px;"><div class="c b" style="left:0;right:0;bottom:-0.5px;text-align:left;padding-left:1.8px;">4.2</div></div>
<div class="c" style="left:370.6px;top:221.07px;width:41px;height:11.11px;"><div class="c" style="left:0;right:0;bottom:-0.5px;text-align:center;">4.2</div></div>
<div class="c" style="left:411.6px;top:221.07px;width:40.9px;height:11.11px;"><div class="c" style="left:0;right:0;bottom:-0.5px;text-align:center;">4.2</div></div>
<div class="c" style="left:452.5px;top:221.07px;width:41px;height:11.11px;"><div class="c" style="left:0;right:0;bottom:-0.5px;text-align:center;">4.2</div></div>
<div class="c" style="left:493.5px;top:221.07px;width:64.2px;height:11.11px;"></div>
<div class="c" style="left:58.6px;top:221.07px;width:312px;height:11.11px;"><div class="c b" style="left:0;right:0;bottom:-0.5px;text-align:left;padding-left:1.8px;letter-spacing:0.232px;">Verstehen der Erfordernisse und Erwartungen der interessierten</div></div>
<div class="c" style="left:17.6px;top:232.18px;width:41px;height:11.11px;"><div class="c b" style="left:0;right:0;bottom:-0.5px;text-align:left;padding-left:1.8px;">4.3</div></div>
<div class="c" style="left:370.6px;top:232.18px;width:41px;height:11.11px;"><div class="c" style="left:0;right:0;bottom:-0.5px;text-align:center;">4.3</div></div>
<div class="c" style="left:411.6px;top:232.18px;width:40.9px;height:11.11px;"><div class="c" style="left:0;right:0;bottom:-0.5px;text-align:center;">4.3</div></div>
<div class="c" style="left:452.5px;top:232.18px;width:41px;height:11.11px;"><div class="c" style="left:0;right:0;bottom:-0.5px;text-align:center;">4.3</div></div>
<div class="c" style="left:493.5px;top:232.18px;width:64.2px;height:11.11px;"></div>
<div class="c" style="left:58.6px;top:232.18px;width:312px;height:11.11px;"><div class="c b" style="left:0;right:0;bottom:-0.5px;text-align:left;padding-left:1.8px;letter-spacing:0.194px;">Festlegen des Anwendungsbereichs des CMS</div></div>
<div class="c" style="left:17.6px;top:243.29px;width:41px;height:11.11px;"><div class="c b" style="left:0;right:0;bottom:-0.5px;text-align:left;padding-left:1.8px;">4.4</div></div>
<div class="c" style="left:370.6px;top:243.29px;width:41px;height:11.11px;"><div class="c" style="left:0;right:0;bottom:-0.5px;text-align:center;">4.4</div></div>
<div class="c" style="left:411.6px;top:243.29px;width:40.9px;height:11.11px;"><div class="c" style="left:0;right:0;bottom:-0.5px;text-align:center;">4.4</div></div>
<div class="c" style="left:452.5px;top:243.29px;width:41px;height:11.11px;"><div class="c" style="left:0;right:0;bottom:-0.5px;text-align:center;">4.4</div></div>
<div class="c" style="left:493.5px;top:243.29px;width:64.2px;height:11.11px;"></div>
<div class="c" style="left:58.6px;top:243.29px;width:312px;height:11.11px;"><div class="c b" style="left:0;right:0;bottom:-0.5px;text-align:left;padding-left:1.8px;letter-spacing:0.116px;">Compliance-Managementsystem (CMS)</div></div>
<div class="c" style="left:17.6px;top:254.4px;width:41px;height:21.5px;"><div class="c b" style="left:0;right:0;top:1px;text-align:left;padding-left:1.8px;">4.5</div></div>
<div class="c" style="left:370.6px;top:254.4px;width:41px;height:21.5px;"></div>
<div class="c" style="left:411.6px;top:254.4px;width:40.9px;height:21.5px;"><div class="c" style="left:0;right:0;top:1px;text-align:center;">6.3.1</div></div>
<div class="c" style="left:452.5px;top:254.4px;width:41px;height:21.5px;"><div class="c" style="left:0;right:0;top:1px;text-align:center;">6.1.3</div></div>
<div class="c" style="left:493.5px;top:254.4px;width:64.2px;height:21.5px;"><div class="c" style="left:0;right:0;top:1px;text-align:left;padding-left:1.5px;color:#111;white-space:pre;letter-spacing:-0.175px;">Kein Bezug zur
9001</div></div>
<div class="c" style="left:58.6px;top:254.4px;width:312px;height:21.5px;"><div class="c b" style="left:0;right:0;top:1px;text-align:left;padding-left:1.8px;letter-spacing:0.147px;">Complianceverpflichtungen</div></div>
<div class="c" style="left:17.6px;top:275.9px;width:41px;height:11.34px;"><div class="c b" style="left:0;right:0;bottom:-0.5px;text-align:left;padding-left:1.8px;">4.6</div></div>
<div class="c" style="left:370.6px;top:275.9px;width:41px;height:11.34px;"></div>
<div class="c" style="left:411.6px;top:275.9px;width:40.9px;height:11.34px;"></div>
<div class="c" style="left:452.5px;top:275.9px;width:41px;height:11.34px;"></div>
<div class="c" style="left:493.5px;top:275.9px;width:64.2px;height:11.34px;"><div class="c" style="left:0;right:0;bottom:-0.5px;text-align:left;padding-left:1.5px;color:#111;letter-spacing:-0.124px;">Neues Kapitel</div></div>
<div class="c" style="left:58.6px;top:275.9px;width:312px;height:11.34px;"><div class="c b" style="left:0;right:0;bottom:-0.5px;text-align:left;padding-left:1.8px;letter-spacing:0.132px;">Compliancerisikobeurteilung</div></div>
<div class="c" style="left:17.6px;top:287.24px;width:41px;height:11.11px;"><div class="c b" style="left:0;right:0;bottom:-0.5px;text-align:left;padding-left:1.8px;">5</div></div>
<div class="c" style="left:370.6px;top:287.24px;width:41px;height:11.11px;"></div>
<div class="c" style="left:411.6px;top:287.24px;width:40.9px;height:11.11px;"></div>
<div class="c" style="left:452.5px;top:287.24px;width:41px;height:11.11px;"></div>
<div class="c" style="left:493.5px;top:287.24px;width:64.2px;height:11.11px;"></div>
<div class="c" style="left:58.6px;top:287.24px;width:312px;height:11.11px;"><div class="c b" style="left:0;right:0;bottom:-0.5px;text-align:left;padding-left:1.8px;letter-spacing:0.148px;">Führung (nur Überschrift)</div></div>
<div class="c" style="left:17.6px;top:298.35px;width:41px;height:11.11px;"><div class="c b" style="left:0;right:0;bottom:-0.5px;text-align:left;padding-left:1.8px;">5.1</div></div>
<div class="c" style="left:370.6px;top:298.35px;width:41px;height:11.11px;"></div>
<div class="c" style="left:411.6px;top:298.35px;width:40.9px;height:11.11px;"></div>
<div class="c" style="left:452.5px;top:298.35px;width:41px;height:11.11px;"></div>
<div class="c" style="left:493.5px;top:298.35px;width:64.2px;height:11.11px;"></div>
<div class="c" style="left:58.6px;top:298.35px;width:312px;height:11.11px;"><div class="c b" style="left:0;right:0;bottom:-0.5px;text-align:left;padding-left:1.8px;letter-spacing:0.169px;">Führung und Verpflichtung (nur Überschrift)</div></div>
<div class="c" style="left:17.6px;top:309.46px;width:41px;height:11.11px;"><div class="c" style="left:0;right:0;bottom:-0.5px;text-align:left;padding-left:1.8px;">5.1.1</div></div>
<div class="c" style="left:370.6px;top:309.46px;width:41px;height:11.11px;"><div class="c" style="left:0;right:0;bottom:-0.5px;text-align:center;">5.1.1</div></div>
<div class="c" style="left:411.6px;top:309.46px;width:40.9px;height:11.11px;"><div class="c" style="left:0;right:0;bottom:-0.5px;text-align:center;">5.1</div></div>
<div class="c" style="left:452.5px;top:309.46px;width:41px;height:11.11px;"><div class="c" style="left:0;right:0;bottom:-0.5px;text-align:center;">5.1</div></div>
<div class="c" style="left:493.5px;top:309.46px;width:64.2px;height:11.11px;"></div>
<div class="c" style="left:58.6px;top:309.46px;width:312px;height:11.11px;"><div class="c" style="left:0;right:0;bottom:-0.5px;text-align:left;padding-left:1.8px;letter-spacing:0.008px;">Oberstes Organ und oberste Leitung</div></div>
<div class="c" style="left:17.6px;top:320.57px;width:41px;height:11.11px;"><div class="c" style="left:0;right:0;bottom:-0.5px;text-align:left;padding-left:1.8px;">5.1.2</div></div>
<div class="c" style="left:370.6px;top:320.57px;width:41px;height:11.11px;"></div>
<div class="c" style="left:411.6px;top:320.57px;width:40.9px;height:11.11px;"></div>
<div class="c" style="left:452.5px;top:320.57px;width:41px;height:11.11px;"></div>
<div class="c" style="left:493.5px;top:320.57px;width:64.2px;height:11.11px;"><div class="c" style="left:0;right:0;bottom:-0.5px;text-align:left;padding-left:1.5px;color:#111;letter-spacing:-0.124px;">Neues Kapitel</div></div>
<div class="c" style="left:58.6px;top:320.57px;width:312px;height:11.11px;"><div class="c" style="left:0;right:0;bottom:-0.5px;text-align:left;padding-left:1.8px;letter-spacing:-0.092px;">Compliancekultur</div></div>
<div class="c" style="left:17.6px;top:331.68px;width:41px;height:11.11px;"><div class="c" style="left:0;right:0;bottom:-0.5px;text-align:left;padding-left:1.8px;">5.1.3</div></div>
<div class="c" style="left:370.6px;top:331.68px;width:41px;height:11.11px;"></div>
<div class="c" style="left:411.6px;top:331.68px;width:40.9px;height:11.11px;"></div>
<div class="c" style="left:452.5px;top:331.68px;width:41px;height:11.11px;"></div>
<div class="c" style="left:493.5px;top:331.68px;width:64.2px;height:11.11px;"><div class="c" style="left:0;right:0;bottom:-0.5px;text-align:left;padding-left:1.5px;color:#111;letter-spacing:-0.124px;">Neues Kapitel</div></div>
<div class="c" style="left:58.6px;top:331.68px;width:312px;height:11.11px;"><div class="c" style="left:0;right:0;bottom:-0.5px;text-align:left;padding-left:1.8px;letter-spacing:-0.157px;">Complianceführung</div></div>
<div class="c" style="left:17.6px;top:342.79px;width:41px;height:11.11px;"><div class="c b" style="left:0;right:0;bottom:-0.5px;text-align:left;padding-left:1.8px;">5.2</div></div>
<div class="c" style="left:370.6px;top:342.79px;width:41px;height:11.11px;"><div class="c" style="left:0;right:0;bottom:-0.5px;text-align:center;">5.2</div></div>
<div class="c" style="left:411.6px;top:342.79px;width:40.9px;height:11.11px;"><div class="c" style="left:0;right:0;bottom:-0.5px;text-align:center;">5.2</div></div>
<div class="c" style="left:452.5px;top:342.79px;width:41px;height:11.11px;"><div class="c" style="left:0;right:0;bottom:-0.5px;text-align:center;">5.2</div></div>
<div class="c" style="left:493.5px;top:342.79px;width:64.2px;height:11.11px;"></div>
<div class="c" style="left:58.6px;top:342.79px;width:312px;height:11.11px;"><div class="c b" style="left:0;right:0;bottom:-0.5px;text-align:left;padding-left:1.8px;letter-spacing:0.007px;">Compliancepolitik</div></div>
<div class="c" style="left:17.6px;top:353.9px;width:41px;height:11.11px;"><div class="c b" style="left:0;right:0;bottom:-0.5px;text-align:left;padding-left:1.8px;">5.3</div></div>
<div class="c" style="left:370.6px;top:353.9px;width:41px;height:11.11px;"></div>
<div class="c" style="left:411.6px;top:353.9px;width:40.9px;height:11.11px;"></div>
<div class="c" style="left:452.5px;top:353.9px;width:41px;height:11.11px;"></div>
<div class="c" style="left:493.5px;top:353.9px;width:64.2px;height:11.11px;"></div>
<div class="c" style="left:58.6px;top:353.9px;width:312px;height:11.11px;"><div class="c b" style="left:0;right:0;bottom:-0.5px;text-align:left;padding-left:1.8px;letter-spacing:0.175px;">Rollen, Verantwortlichkeiten und Befugnisse (nur Überschrift)</div></div>
<div class="c" style="left:17.6px;top:365.01px;width:41px;height:11.11px;"><div class="c" style="left:0;right:0;bottom:-0.5px;text-align:left;padding-left:1.8px;">5.3.1</div></div>
<div class="c" style="left:370.6px;top:365.01px;width:41px;height:11.11px;"><div class="c" style="left:0;right:0;bottom:-0.5px;text-align:center;">5.1.1</div></div>
<div class="c" style="left:411.6px;top:365.01px;width:40.9px;height:11.11px;"><div class="c" style="left:0;right:0;bottom:-0.5px;text-align:center;">5.1</div></div>
<div class="c" style="left:452.5px;top:365.01px;width:41px;height:11.11px;"><div class="c" style="left:0;right:0;bottom:-0.5px;text-align:center;">5.1</div></div>
<div class="c" style="left:493.5px;top:365.01px;width:64.2px;height:11.11px;"></div>
<div class="c" style="left:58.6px;top:365.01px;width:312px;height:11.11px;"><div class="c" style="left:0;right:0;bottom:-0.5px;text-align:left;padding-left:1.8px;letter-spacing:0.008px;">Oberstes Organ und oberste Leitung</div></div>
<div class="c" style="left:17.6px;top:376.12px;width:41px;height:11.11px;"><div class="c" style="left:0;right:0;bottom:-0.5px;text-align:left;padding-left:1.8px;">5.3.2</div></div>
<div class="c" style="left:370.6px;top:376.12px;width:41px;height:11.11px;"></div>
<div class="c" style="left:411.6px;top:376.12px;width:40.9px;height:11.11px;"></div>
<div class="c" style="left:452.5px;top:376.12px;width:41px;height:11.11px;"></div>
<div class="c" style="left:493.5px;top:376.12px;width:64.2px;height:11.11px;"><div class="c" style="left:0;right:0;bottom:-0.5px;text-align:left;padding-left:1.5px;color:#111;letter-spacing:-0.124px;">Neues Kapitel</div></div>
<div class="c" style="left:58.6px;top:376.12px;width:312px;height:11.11px;"><div class="c" style="left:0;right:0;bottom:-0.5px;text-align:left;padding-left:1.8px;letter-spacing:-0.111px;">Compliancefunktion</div></div>
<div class="c" style="left:17.6px;top:387.23px;width:41px;height:11.11px;"><div class="c" style="left:0;right:0;bottom:-0.5px;text-align:left;padding-left:1.8px;">5.3.3</div></div>
<div class="c" style="left:370.6px;top:387.23px;width:41px;height:11.11px;"></div>
<div class="c" style="left:411.6px;top:387.23px;width:40.9px;height:11.11px;"></div>
<div class="c" style="left:452.5px;top:387.23px;width:41px;height:11.11px;"></div>
<div class="c" style="left:493.5px;top:387.23px;width:64.2px;height:11.11px;"><div class="c" style="left:0;right:0;bottom:-0.5px;text-align:left;padding-left:1.5px;color:#111;letter-spacing:-0.124px;">Neues Kapitel</div></div>
<div class="c" style="left:58.6px;top:387.23px;width:312px;height:11.11px;"><div class="c" style="left:0;right:0;bottom:-0.5px;text-align:left;padding-left:1.8px;letter-spacing:-0.112px;">Leitung</div></div>
<div class="c" style="left:17.6px;top:398.34px;width:41px;height:11.11px;"><div class="c" style="left:0;right:0;bottom:-0.5px;text-align:left;padding-left:1.8px;">5.3.4</div></div>
<div class="c" style="left:370.6px;top:398.34px;width:41px;height:11.11px;"></div>
<div class="c" style="left:411.6px;top:398.34px;width:40.9px;height:11.11px;"></div>
<div class="c" style="left:452.5px;top:398.34px;width:41px;height:11.11px;"></div>
<div class="c" style="left:493.5px;top:398.34px;width:64.2px;height:11.11px;"><div class="c" style="left:0;right:0;bottom:-0.5px;text-align:left;padding-left:1.5px;color:#111;letter-spacing:-0.124px;">Neues Kapitel</div></div>
<div class="c" style="left:58.6px;top:398.34px;width:312px;height:11.11px;"><div class="c" style="left:0;right:0;bottom:-0.5px;text-align:left;padding-left:1.8px;letter-spacing:-0.133px;">Personal</div></div>
<div class="c" style="left:17.6px;top:409.45px;width:41px;height:11.11px;"><div class="c b" style="left:0;right:0;bottom:-0.5px;text-align:left;padding-left:1.8px;">6</div></div>
<div class="c" style="left:370.6px;top:409.45px;width:41px;height:11.11px;"></div>
<div class="c" style="left:411.6px;top:409.45px;width:40.9px;height:11.11px;"></div>
<div class="c" style="left:452.5px;top:409.45px;width:41px;height:11.11px;"></div>
<div class="c" style="left:493.5px;top:409.45px;width:64.2px;height:11.11px;"></div>
<div class="c" style="left:58.6px;top:409.45px;width:312px;height:11.11px;"><div class="c b" style="left:0;right:0;bottom:-0.5px;text-align:left;padding-left:1.8px;letter-spacing:0.113px;">Planung (nur Überschrift)</div></div>
<div class="c" style="left:17.6px;top:420.56px;width:41px;height:11.11px;"><div class="c b" style="left:0;right:0;bottom:-0.5px;text-align:left;padding-left:1.8px;">6.1</div></div>
<div class="c" style="left:370.6px;top:420.56px;width:41px;height:11.11px;"><div class="c" style="left:0;right:0;bottom:-0.5px;text-align:center;">6.1</div></div>
<div class="c" style="left:411.6px;top:420.56px;width:40.9px;height:11.11px;"><div class="c" style="left:0;right:0;bottom:-0.5px;text-align:center;">6.1.1</div></div>
<div class="c" style="left:452.5px;top:420.56px;width:41px;height:11.11px;"><div class="c" style="left:0;right:0;bottom:-0.5px;text-align:center;">6.1.1</div></div>
<div class="c" style="left:493.5px;top:420.56px;width:64.2px;height:11.11px;"></div>
<div class="c" style="left:58.6px;top:420.56px;width:312px;height:11.11px;"><div class="c b" style="left:0;right:0;bottom:-0.5px;text-align:left;padding-left:1.8px;letter-spacing:0.092px;">Maßnahmen zum Umgang mit Risiken und Möglichkeiten</div></div>
<div class="c" style="left:17.6px;top:431.67px;width:41px;height:11.11px;"><div class="c b" style="left:0;right:0;bottom:-0.5px;text-align:left;padding-left:1.8px;">6.2</div></div>
<div class="c" style="left:370.6px;top:431.67px;width:41px;height:11.11px;"><div class="c" style="left:0;right:0;bottom:-0.5px;text-align:center;">6.2</div></div>
<div class="c" style="left:411.6px;top:431.67px;width:40.9px;height:11.11px;"><div class="c" style="left:0;right:0;bottom:-0.5px;text-align:center;">6.2</div></div>
<div class="c" style="left:452.5px;top:431.67px;width:41px;height:11.11px;"><div class="c" style="left:0;right:0;bottom:-0.5px;text-align:center;">6.2</div></div>
<div class="c" style="left:493.5px;top:431.67px;width:64.2px;height:11.11px;"></div>
<div class="c" style="left:58.6px;top:431.67px;width:312px;height:11.11px;"><div class="c b" style="left:0;right:0;bottom:-0.5px;text-align:left;padding-left:1.8px;letter-spacing:0.124px;">Complianceziele und Planung zu ihrer Erreichung</div></div>
<div class="c" style="left:17.6px;top:442.78px;width:41px;height:22.22px;"><div class="c b" style="left:0;right:0;top:1px;text-align:left;padding-left:1.8px;">6.3</div></div>
<div class="c" style="left:370.6px;top:442.78px;width:41px;height:22.22px;"><div class="c" style="left:0;right:0;top:1px;text-align:center;">6.3</div></div>
<div class="c" style="left:411.6px;top:442.78px;width:40.9px;height:22.22px;"></div>
<div class="c" style="left:452.5px;top:442.78px;width:41px;height:22.22px;"></div>
<div class="c" style="left:493.5px;top:442.78px;width:64.2px;height:22.22px;"><div class="c" style="left:0;right:0;top:1px;text-align:left;padding-left:1.5px;color:#111;white-space:pre;letter-spacing:-0.175px;">Kein Bezug zur
9001</div></div>
<div class="c" style="left:58.6px;top:442.78px;width:312px;height:22.22px;"><div class="c b" style="left:0;right:0;top:1px;text-align:left;padding-left:1.8px;letter-spacing:0.154px;">Planung von Änderungen</div></div>
<svg style="left:0;top:0" width="581.3" height="456" fill="none"><path d="M58.6 143.3V456M370.6 120.7V456M411.6 143.3V456M452.5 143.3V456M493.5 120.7V456M557.7 120.7V456M17.6 143.3H558.12M17.6 154.41H558.12M17.6 165.52H558.12M17.6 176.63H558.12M17.6 187.74H558.12M17.6 198.85H558.12M17.6 209.96H558.12M17.6 221.07H558.12M17.6 232.18H558.12M17.6 243.29H558.12M17.6 254.4H558.12M17.6 275.9H558.12M17.6 287.24H558.12M17.6 298.35H558.12M17.6 309.46H558.12M17.6 320.57H558.12M17.6 331.68H558.12M17.6 342.79H558.12M17.6 353.9H558.12M17.6 365.01H558.12M17.6 376.12H558.12M17.6 387.23H558.12M17.6 398.34H558.12M17.6 409.45H558.12M17.6 420.56H558.12M17.6 431.67H558.12M17.6 442.78H558.12" stroke="#161616" stroke-width="0.85"/><path d="M17.6 120.7H558.12" stroke="#161616" stroke-opacity=".6" stroke-width="0.85"/></svg>
</div>
<div style="left:581.3px;top:97px;width:18.7px;height:456px;background:#e6e6e6"></div>
<div style="left:581.3px;top:109px;width:1.4px;height:443.3px;background:#c8c8c8"></div>
<div style="left:582.7px;top:340px;width:17.3px;height:197px;background:#dcdcdc"></div>
<div class="sb" style="left:583px;top:97.9px;width:14.8px;height:14.8px"></div>
<svg style="left:587px;top:103.2px" width="7" height="4"><path d="M0 3.8 l3.5 -3.8 l3.5 3.8z" fill="#6f6f6f"/></svg>
<div class="sb" style="left:583px;top:113.4px;width:14.8px;height:226.8px"></div>
<div class="sb" style="left:583px;top:538.2px;width:14.8px;height:14.8px"></div>
<svg style="left:587px;top:544.5px" width="7" height="4"><path d="M0 0 l3.5 3.6 l3.5 -3.6z" fill="#6f6f6f"/></svg>
<svg style="left:0;top:0" width="600" height="594"><rect x="0" y="552.9" width="600" height="21" fill="#e6e6e6"/><rect x="0" y="552.8" width="600" height="0.9" fill="#cdcdcd"/><rect x="73.4" y="552" width="100" height="19.9" fill="#c9c9c9"/><rect x="74.2" y="552" width="98.4" height="19.9" fill="#fff"/><rect x="73.4" y="570.1" width="100" height="1.8" fill="#217346"/></svg>
<svg style="left:0;top:0" width="600" height="594"><path d="M23.5 560.3 l-3 3.2 l3 3.2z" fill="#c2c2c2"/><path d="M40.5 560.3 l3 3.2 l-3 3.2z" fill="#c2c2c2"/></svg>
<div class="u b" style="left:81.3px;top:553.97px;font-size:12.2px;line-height:16px;color:#217346;transform:scaleX(1.0365)">Kompatibilität</div>
<svg style="left:0;top:0" width="600" height="594" fill="none"><circle cx="204.5" cy="563.7" r="5.7" stroke="#767676" stroke-width="0.9"/><path d="M201.5 563.7 h6 M204.5 560.7 v6" stroke="#767676" stroke-width="0.9"/></svg>
<div style="left:358px;top:557.4px;width:2px;height:2px;background:#b0b0b0"></div>
<div style="left:358px;top:561.5px;width:2px;height:2px;background:#b0b0b0"></div>
<div style="left:358px;top:565.5px;width:2px;height:2px;background:#b0b0b0"></div>
<div style="left:386px;top:554.7px;width:181px;height:15.6px;background:#dcdcdc"></div>
<div class="sb" style="left:370.8px;top:554.7px;width:14.7px;height:15.6px"></div>
<svg style="left:375.8px;top:559.5px" width="5" height="7"><path d="M4.2 0 l-4.2 3.3 l4.2 3.3z" fill="#646464"/></svg>
<div class="sb" style="left:386.5px;top:554.7px;width:135px;height:15.6px"></div>
<div class="sb" style="left:567px;top:554.7px;width:14.6px;height:15.6px"></div>
<svg style="left:572.5px;top:559.5px" width="5" height="7"><path d="M0 0 l4.2 3.3 l-4.2 3.3z" fill="#646464"/></svg>
<div style="left:0;top:572.7px;width:600px;height:21.3px;background:#f1f1f1"></div>
<div style="left:0;top:572.7px;width:600px;height:1px;background:#d6d6d6"></div>
<div class="u" style="left:5.9px;top:577.24px;font-size:10px;line-height:13px;color:#444;transform:scaleX(0.9187)">Bereit</div>
<div style="left:351.3px;top:573.2px;width:27.7px;height:20.8px;background:#c8c8c8"></div>
<svg style="left:0;top:0" width="600" height="594" fill="none" stroke="#626262" stroke-width="0.850">
<path d="M360.5 578.9 h10 v9.6 h-10z M360.5 582.1 h10 M360.5 585.3 h10 M363.8 578.9 v9.6 M367.2 578.9 v9.6"/>
<path d="M388.2 578.9 h9.8 v9.6 h-9.8z M390.5 581 h5.2 v5.6 h-5.2z M391.5 582.8 h3.2 M391.5 584.6 h3.2" />
<path d="M415.9 578.9 h10.3 v9 h-10.3z M415.9 584 h10.3 M420.5 578.9 v5.1"/>
<path d="M438.6 583.6 h6.4" stroke-width="1.5" stroke="#444"/>
<path d="M449.5 583.6 h91" stroke="#a5a5a5"/>
<path d="M495.6 581.7 v4.3" stroke="#a5a5a5"/>
<path d="M480.7 578.6 v9.5" stroke="#444" stroke-width="3"/>
<path d="M544.8 583.6 h8.2 M548.9 579.6 v8.1" stroke-width="1.5" stroke="#444"/>
</svg>
<div class="u" style="left:563.8px;top:577.1px;font-size:9.8px;line-height:13px;color:#444;transform:scaleX(0.9401)">70 %</div>
<div style="left:0;top:593px;width:600px;height:1px;background:#bdbdbd"></div>
<div style="left:0;top:57.3px;width:1.1px;height:537px;background:#adadad"></div>
</body></html>
